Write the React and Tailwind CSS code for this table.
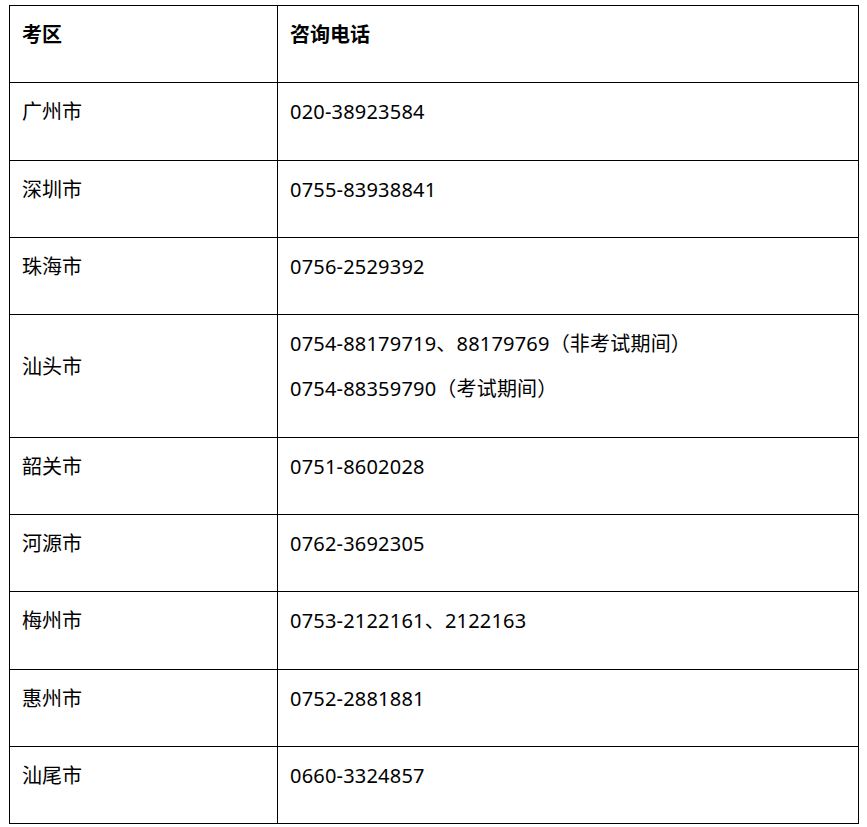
const rows = [
  ['广州市', ['020-38923584']],
  ['深圳市', ['0755-83938841']],
  ['珠海市', ['0756-2529392']],
  ['汕头市', ['0754-88179719、88179769（非考试期间）', '0754-88359790（考试期间）']],
  ['韶关市', ['0751-8602028']],
  ['河源市', ['0762-3692305']],
  ['梅州市', ['0753-2122161、2122163']],
  ['惠州市', ['0752-2881881']],
  ['汕尾市', ['0660-3324857']],
];

function Cell({ children, className = '' }) {
  return (
    <td className={`border border-black align-middle pl-[12px] pr-3 pt-[15px] pb-[16.35px] ${className}`}>
      {children}
    </td>
  );
}

export default function App() {
  return (
    <div
      className="bg-white min-h-screen pt-[5px] pl-[9px] text-black text-[20px]"
      style={{ fontFamily: '"Noto Sans", "Noto Sans CJK SC", sans-serif' }}
    >
      <table className="border-collapse w-[850px] table-fixed">
        <colgroup>
          <col className="w-[268px]" />
          <col />
        </colgroup>
        <thead>
          <tr>
            <Cell className="text-left font-bold">
              <p className="leading-[28px] mb-[17px]">考区</p>
            </Cell>
            <Cell className="text-left font-bold">
              <p className="leading-[28px] mb-[17px]">咨询电话</p>
            </Cell>
          </tr>
        </thead>
        <tbody>
          {rows.map(([city, phones]) => (
            <tr key={city}>
              <Cell>
                <p className="leading-[28px] mb-[17px]">{city}</p>
              </Cell>
              <Cell className="tracking-[0.2px]">
                {phones.map((p) => (
                  <p key={p} className="leading-[28px] mb-[17px]">{p}</p>
                ))}
              </Cell>
            </tr>
          ))}
        </tbody>
      </table>
    </div>
  );
}
